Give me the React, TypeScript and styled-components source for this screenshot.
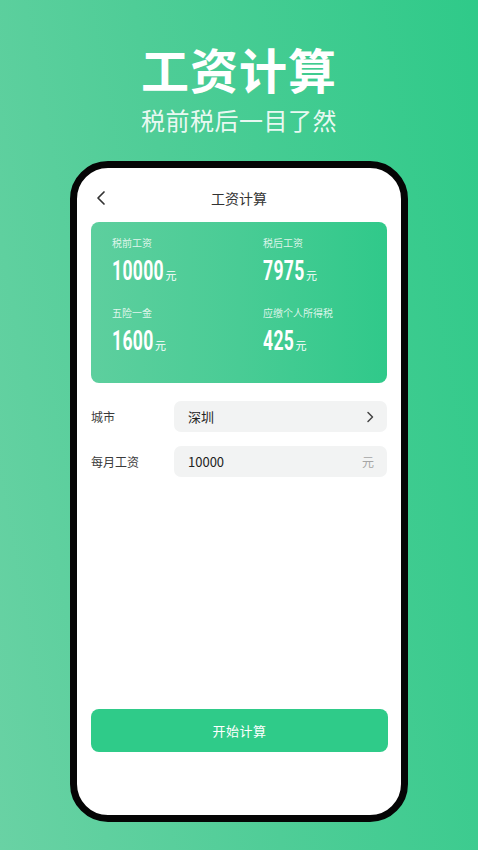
import styled, { createGlobalStyle } from 'styled-components'

const GlobalStyle = createGlobalStyle`
  html, body {
    margin: 0;
    padding: 0;
  }
  body {
    font-family: "Noto Sans CJK SC", "Noto Sans", sans-serif;
  }
`

const Page = styled.div`
  width: 478px;
  height: 850px;
  overflow: hidden;
  display: flex;
  flex-direction: column;
  align-items: center;
  padding-top: 40px;
  box-sizing: border-box;
  background: linear-gradient(80deg, #69d2a4 0%, #4fcd97 45%, #2fca89 100%);
`

const Title = styled.h1`
  margin: 0;
  font-size: 48px;
  line-height: 56px;
  font-weight: 700;
  color: #ffffff;
  letter-spacing: 1px;
`

const Subtitle = styled.p`
  margin: 8px 0 0;
  font-size: 24px;
  line-height: 32px;
  color: rgba(255, 255, 255, 0.9);
  letter-spacing: 0.5px;
`

const Phone = styled.div`
  margin-top: 25px;
  width: 338px;
  height: 661px;
  box-sizing: border-box;
  border: 7px solid #050505;
  border-radius: 38px;
  background: #ffffff;
  display: flex;
  flex-direction: column;
  overflow: hidden;
`

const NavBar = styled.div`
  height: 54px;
  padding-top: 6px;
  box-sizing: border-box;
  position: relative;
  display: flex;
  align-items: center;
  justify-content: center;
`

const BackButton = styled.span`
  position: absolute;
  left: 18px;
  top: 22px;
  width: 12px;
  height: 16px;
  display: flex;
`

const NavTitle = styled.div`
  font-size: 14px;
  color: #333333;
`

const SummaryCard = styled.div`
  margin: 0 14px;
  height: 161px;
  box-sizing: border-box;
  border-radius: 8px;
  padding: 14px 20px 0 21px;
  background: linear-gradient(90deg, #5dcf9e 0%, #49cc95 50%, #30c98a 100%);
  display: grid;
  grid-template-columns: 151px 1fr;
  grid-auto-rows: 70px;
`

const Stat = styled.div`
  display: flex;
  flex-direction: column;
`

const StatLabel = styled.span`
  font-size: 10px;
  line-height: 14px;
  color: rgba(255, 255, 255, 0.82);
`

const StatValue = styled.div`
  margin-top: 5px;
  display: flex;
  align-items: baseline;
  color: #ffffff;
  line-height: 32px;
`

const Digits = styled.span<{ $len: number }>`
  display: inline-block;
  font-family: "Roboto", "Liberation Sans", sans-serif;
  font-weight: 700;
  font-size: 27px;
  letter-spacing: 0.5px;
  transform: scaleX(0.65);
  transform-origin: left;
  margin-right: ${p => -p.$len * 5.5}px;
`

const Unit = styled.span`
  font-size: 11px;
  margin-left: 1px;
  color: #ffffff;
`

const Form = styled.div`
  margin-top: 18px;
  padding: 0 14px;
  display: flex;
  flex-direction: column;
  gap: 14px;
`

const FieldRow = styled.div`
  display: flex;
  align-items: center;
`

const FieldLabel = styled.span`
  width: 83px;
  flex-shrink: 0;
  font-size: 12px;
  color: #3a3a3a;
`

const FieldBox = styled.div`
  flex: 1;
  height: 31px;
  border-radius: 7px;
  background: #f2f3f3;
  display: flex;
  align-items: center;
  justify-content: space-between;
  padding: 0 13px 0 14px;
  box-sizing: border-box;
`

const FieldValue = styled.span`
  font-size: 13px;
  color: #222222;
`

const FieldSuffix = styled.span`
  font-size: 12px;
  color: #a5a5a5;
`

const Spacer = styled.div`
  flex: 1;
`

const StartButton = styled.button`
  margin: 0 13px 63px 14px;
  height: 43px;
  border: none;
  border-radius: 8px;
  background: #2fcb89;
  color: #ffffff;
  font-family: "Noto Sans CJK SC", sans-serif;
  font-size: 13px;
  letter-spacing: 0.5px;
`

const stats = [
  { label: '税前工资', value: '10000' },
  { label: '税后工资', value: '7975' },
  { label: '五险一金', value: '1600' },
  { label: '应缴个人所得税', value: '425' },
]

const ChevronLeft = () => (
  <svg width="12" height="16" viewBox="0 0 12 16">
    <path d="M9 2 L3 8 L9 14" fill="none" stroke="#333" strokeWidth="1.7" strokeLinecap="round" strokeLinejoin="round" />
  </svg>
)

const ChevronRight = () => (
  <svg width="8" height="12" viewBox="0 0 8 12">
    <path d="M2 1.5 L6.5 6 L2 10.5" fill="none" stroke="#444" strokeWidth="1.5" strokeLinecap="round" strokeLinejoin="round" />
  </svg>
)

export default function App() {
  return (
    <>
      <GlobalStyle />
      <Page>
        <Title>工资计算</Title>
        <Subtitle>税前税后一目了然</Subtitle>
        <Phone>
          <NavBar>
            <BackButton>
              <ChevronLeft />
            </BackButton>
            <NavTitle>工资计算</NavTitle>
          </NavBar>
          <SummaryCard>
            {stats.map(s => (
              <Stat key={s.label}>
                <StatLabel>{s.label}</StatLabel>
                <StatValue>
                  <Digits $len={s.value.length}>{s.value}</Digits>
                  <Unit>元</Unit>
                </StatValue>
              </Stat>
            ))}
          </SummaryCard>
          <Form>
            <FieldRow>
              <FieldLabel>城市</FieldLabel>
              <FieldBox>
                <FieldValue>深圳</FieldValue>
                <ChevronRight />
              </FieldBox>
            </FieldRow>
            <FieldRow>
              <FieldLabel>每月工资</FieldLabel>
              <FieldBox>
                <FieldValue>10000</FieldValue>
                <FieldSuffix>元</FieldSuffix>
              </FieldBox>
            </FieldRow>
          </Form>
          <Spacer />
          <StartButton>开始计算</StartButton>
        </Phone>
      </Page>
    </>
  )
}
